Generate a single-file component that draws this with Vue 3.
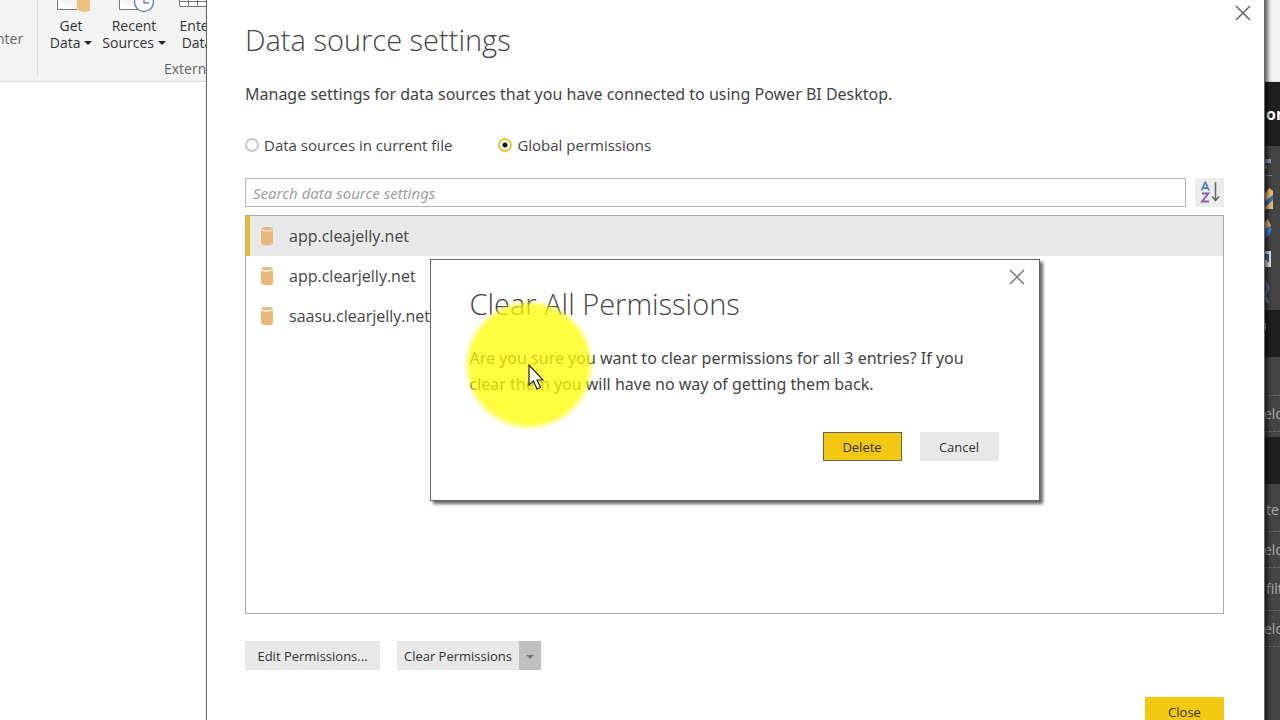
<script setup>
import { ref } from 'vue'

const scope = ref('global')
const search = ref('')
const selected = ref(0)
const sources = ['app.cleajelly.net', 'app.clearjelly.net', 'saasu.clearjelly.net']
</script>

<template>
  <div class="app">
    <header class="ribbon">
      <div class="group center-group"><span>nter</span></div>
      <div class="group external">
        <div class="tools">
          <button class="tool get">
            <svg width="40" height="16" viewBox="0 0 40 16" aria-hidden="true">
              <path d="M7.500 0V9.500H27" fill="#fff" stroke="#777" />
              <path d="M27 0H43V8C43 13 27 13 27 8Z" fill="#eec27c" />
            </svg>
            <span>Get</span>
            <span>Data <i class="caret"></i></span>
          </button>
          <button class="tool recent">
            <svg width="40" height="16" viewBox="0 0 40 16" aria-hidden="true">
              <path d="M5.500 0V9.500H26" fill="#fff" stroke="#777" />
              <circle cx="30" cy="2" r="9.500" fill="#fff" stroke="#6683b5" stroke-width="1.400" />
              <path d="M30 -3V3H35" fill="none" stroke="#6683b5" stroke-width="1.400" />
            </svg>
            <span>Recent</span>
            <span>Sources <i class="caret"></i></span>
          </button>
          <button class="tool enter">
            <svg width="40" height="16" viewBox="0 0 40 16" aria-hidden="true">
              <path d="M3.500 0V6.500H38V0M3.500 1.500H38M12.500 0V6M21.500 0V6" fill="#fff" stroke="#777" />
            </svg>
            <span>Enter</span>
            <span>Data</span>
          </button>
        </div>
        <div class="group-name">External data</div>
      </div>
    </header>

    <div class="work">
      <main class="canvas"></main>
      <aside class="pane">
        <div class="pane-title">on</div>
        <div class="visuals">
          <svg width="16" height="164" viewBox="0 0 16 164" aria-hidden="true">
            <path d="M0 15H7" stroke="#8796c8" stroke-width="4" />
            <path d="M0 21H3" stroke="#8d969b" stroke-width="3" />
            <path d="M0 29.500H8" stroke="#718b78" />
            <path d="M0 49L5 42L9 45V63H0Z" fill="#efbb72" />
            <path d="M0 56L9 49V54L0 62Z" fill="#3474b2" />
            <path d="M0 77L4 73L7 80L0 84Z" fill="#efb76e" />
            <path d="M0 83L7 80C8 87 5 91 0 92Z" fill="#3d86c7" />
            <path d="M0 105H7V121H0Z" fill="#e5ebf4" />
            <path d="M0 108H5V116H0Z" fill="#50688b" />
            <path d="M0 115H3" stroke="#fff" stroke-width="2" />
            <path d="M-4 137H0C5 137 5 147 0 147H-4M0 147L4 157" fill="none" stroke="#66758d" stroke-width="3" />
          </svg>
        </div>
        <div class="pane-band"><i class="tick"></i></div>
        <div class="well"><span class="drop">eld</span></div>
        <div class="pane-band"></div>
        <div class="filters">
          <span class="line">te</span>
          <span class="drop">eld</span>
          <span class="line">filt</span>
          <span class="drop">eld</span>
        </div>
      </aside>
    </div>

    <section class="dialog" role="dialog" aria-labelledby="settings-title">
      <button class="x" aria-label="Close settings">
        <svg width="16" height="16" viewBox="0 0 16 16"><path d="M1 1L15 15M15 1L1 15" stroke="#666" stroke-width="1.500" /></svg>
      </button>
      <h1 id="settings-title">Data source settings</h1>
      <p class="intro">Manage settings for data sources that you have connected to using Power BI Desktop.</p>
      <div class="scopes">
        <label><input v-model="scope" type="radio" name="scope" value="file">Data sources in current file</label>
        <label><input v-model="scope" type="radio" name="scope" value="global">Global permissions</label>
      </div>
      <div class="search-row">
        <input v-model="search" class="search" type="text" aria-label="Search data source settings" placeholder="Search data source settings">
        <button class="sort" aria-label="Sort A to Z">
          <svg width="29" height="29" viewBox="0 0 29 29">
            <path d="M6.500 12.500L10 4.500H10.500L14 12.500M7.800 10H12.700" fill="none" stroke="#5583bd" stroke-width="1.800" />
            <path d="M7 15.500H13.500L7 23.500H14" fill="none" stroke="#8d59ac" stroke-width="1.800" />
            <path d="M20.500 4V22M17 18.500L20.500 22.500L24 18.500" fill="none" stroke="#666" stroke-width="1.500" />
          </svg>
        </button>
      </div>
      <ul class="list">
        <li v-for="(source, i) in sources" :key="source">
          <button class="source" :class="{ active: selected === i }" @click="selected = i">
            <svg width="12" height="20" viewBox="0 0 12 20" aria-hidden="true">
              <path d="M0 4C2 6 10 6 12 4V17C12 20 0 20 0 17Z" fill="#e9b878" />
              <ellipse cx="6" cy="2.500" rx="5.800" ry="1.800" fill="#e9b878" />
            </svg>
            {{ source }}
          </button>
        </li>
      </ul>
      <div class="actions">
        <button class="btn edit">Edit Permissions...</button>
        <div class="split">
          <button class="btn clear">Clear Permissions</button>
          <button class="more" aria-label="More clear options"><i class="caret"></i></button>
        </div>
      </div>
      <div class="footer"><button class="btn primary">Close</button></div>

      <div class="modal" role="alertdialog" aria-labelledby="clear-title">
        <button class="x" aria-label="Close">
          <svg width="16" height="16" viewBox="0 0 16 16"><path d="M1 1L15 15M15 1L1 15" stroke="#777" stroke-width="1.500" /></svg>
        </button>
        <h2 id="clear-title">Clear All Permissions</h2>
        <p>Are you sure you want to clear permissions for all 3 entries? If you clear them you will have no way of getting them back.</p>
        <div class="modal-actions">
          <button class="btn primary outlined">Delete</button>
          <button class="btn">Cancel</button>
        </div>
        <div class="halo"></div>
        <svg class="pointer" width="16" height="26" viewBox="0 0 16 26" aria-hidden="true">
          <path d="M1 1V21L5.500 17L9 25L12.500 23.500L9 16H15Z" fill="#fff" stroke="#222" stroke-width="1.200" />
        </svg>
      </div>
    </section>
  </div>
</template>

<style>
body { overflow: hidden; }
</style>

<style scoped>
* { box-sizing: border-box; }
.app {
  position: relative;
  display: flex;
  flex-direction: column;
  height: 100vh;
  overflow: hidden;
  background: #fff;
  color: #444;
  font-family: "Open Sans", "Noto Sans", sans-serif;
  font-size: 16px;
}
button { padding: 0; border: 0; background: none; color: inherit; font: inherit; }
svg { display: block; }
h1, h2, p, ul { margin: 0; padding: 0; }

.ribbon {
  display: flex;
  height: 82px;
  flex: none;
  background: #f3f3f3;
  border-bottom: 1px solid #dcdcdc;
  color: #666;
  font-size: 14px;
}
.center-group { width: 38px; height: 77px; padding-top: 29px; border-right: 1px solid #dedede; }
.center-group span { display: block; margin-left: -4px; }
.external { width: 220px; }
.tools { display: flex; gap: 4px; padding-left: 8px; }
.tool { width: 50px; color: #333; line-height: 17px; white-space: nowrap; }
.tool.recent { width: 68px; }
.tool span { display: block; }
.tool svg { margin: 0 auto 1px; }
.tool.get svg, .tool.enter svg { margin-left: 4px; }
.caret {
  display: inline-block;
  border: 4px solid transparent;
  border-top-color: #222;
  border-bottom: 0;
  vertical-align: 3px;
}
.group-name { padding: 8px 0 0 126px; }

.work { display: flex; flex: 1; }
.canvas { flex: 1; }
.pane { width: 16px; background: #444; color: #aaa; white-space: nowrap; font-size: 14px; }
.pane-title { height: 64px; padding: 20px 2px; background: #1f1f1f; color: #fff; font-size: 16px; font-weight: 700; line-height: 24px; }
.visuals { height: 164px; }
.pane-band { height: 47px; padding-top: 13px; background: #1f1f1f; }
.tick { display: block; width: 2px; height: 7px; background: #aaa; }
.well { height: 80px; padding-top: 38px; }
.drop { display: block; height: 37px; border: dashed #6b6b6b; border-width: 1px 0; line-height: 36px; }
.filters { padding-top: 5px; }
.line { display: block; height: 42px; padding-left: 2px; line-height: 42px; }

.dialog {
  position: absolute;
  top: -20px;
  right: 15px;
  bottom: -40px;
  left: 206px;
  display: flex;
  flex-direction: column;
  padding: 38px 40px 33px 38px;
  background: #fff;
  border: 1px solid #666;
  box-shadow: 3px 3px 4px rgba(0, 0, 0, .6);
}
.x { position: absolute; top: 24px; right: 13px; }
h1, h2 { font-size: 29px; font-weight: 300; line-height: 42px; }
p { font-family: "Noto Sans", sans-serif; line-height: 26px; }
.intro { margin-top: 20px; }
.scopes { display: flex; gap: 46px; margin-top: 25px; font-size: 15px; line-height: 26px; }
label { display: flex; align-items: center; gap: 5px; }
input[type="radio"] {
  width: 14px;
  height: 14px;
  margin: 0;
  appearance: none;
  border: 2px solid #c8c8c8;
  border-radius: 50%;
  background: #fff;
}
input[type="radio"]:checked { border-color: #e8c52f; background: radial-gradient(circle, #111 0 2px, #fff 3px); }
.search-row { display: flex; gap: 9px; margin-top: 20px; }
.search {
  flex: 1;
  height: 29px;
  padding: 0 7px;
  border: 1px solid #b5b5b5;
  font: inherit;
  font-family: "Noto Sans", sans-serif;
  font-size: 15px;
}
.search::placeholder { color: #a0a0a0; font-style: italic; opacity: 1; }
.sort { background: #ececec; }
.list { flex: 1; margin-top: 8px; border: 1px solid #aaa; list-style: none; }
.source {
  display: flex;
  width: 100%;
  height: 40px;
  align-items: center;
  gap: 16px;
  padding: 0 11px;
  border-left: 4px solid transparent;
  text-align: left;
}
.source.active { background: #e9e9e9; border-left-color: #e8bd2c; }
.actions { display: flex; gap: 17px; margin-top: 27px; }
.btn { min-width: 79px; height: 29px; background: #e8e8e8; font-size: 13px; color: #333; }
.edit { min-width: 135px; }
.split { display: flex; }
.clear { min-width: 122px; }
.more { width: 22px; background: #bfbfbf; }
.more .caret { border-top-color: #777; }
.footer { display: flex; justify-content: flex-end; margin-top: 27px; }
.primary { background: #f2c811; }
.outlined { border: 1px solid #666; }

.modal {
  position: absolute;
  top: 278px;
  left: 50%;
  width: 610px;
  margin-left: -306px;
  padding: 23px 40px 39px 39px;
  background: #fff;
  border: 1px solid #666;
  box-shadow: 3px 3px 3px rgba(0, 0, 0, .6);
}
.modal .x { top: 9px; right: 14px; }
.modal p { margin-top: 20px; }
.modal-actions { display: flex; justify-content: flex-end; gap: 18px; margin-top: 35px; }
.halo {
  position: absolute;
  top: 43px;
  left: 36px;
  width: 124px;
  height: 124px;
  border-radius: 50%;
  background: rgba(255, 252, 0, .75);
  filter: blur(2px);
}
.pointer { position: absolute; top: 104px; left: 97px; }
</style>
